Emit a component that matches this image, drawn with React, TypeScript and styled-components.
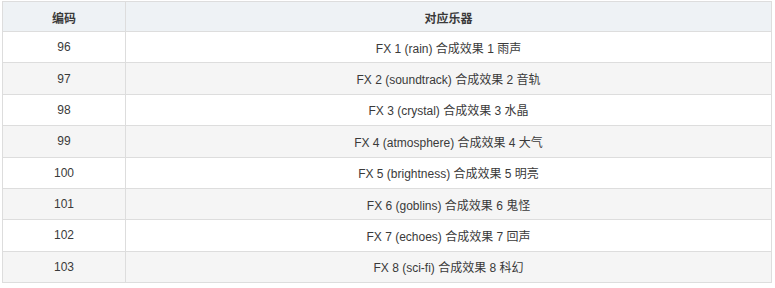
import React from "react";
import styled, { createGlobalStyle } from "styled-components";

const GlobalStyle = createGlobalStyle`
  body {
    margin: 0;
    background: #fff;
    font-family: "Liberation Sans", Arial, "Noto Sans CJK SC", sans-serif;
  }
`;

const Table = styled.table`
  margin: 1px 0 0 2px;
  width: 770px;
  border-collapse: collapse;
  font-size: 12px;
  color: #3a3a3a;
`;

const HeadCell = styled.th<{ $narrow?: boolean }>`
  background: #eef2f5;
  border: 1px solid #ddd;
  height: 30px;
  padding: 1px 8px 0;
  font-weight: bold;
  text-align: center;
  box-sizing: border-box;
  width: ${(p) => (p.$narrow ? "123px" : "auto")};
`;

const Row = styled.tr<{ $striped: boolean }>`
  background: ${(p) => (p.$striped ? "#f5f5f5" : "#fff")};
`;

const Cell = styled.td`
  border: 1px solid #ddd;
  height: 30.375px;
  padding: 0 8px;
  text-align: center;
`;

const instruments: [number, string][] = [
  [96, "FX 1 (rain) 合成效果 1 雨声"],
  [97, "FX 2 (soundtrack) 合成效果 2 音轨"],
  [98, "FX 3 (crystal) 合成效果 3 水晶"],
  [99, "FX 4 (atmosphere) 合成效果 4 大气"],
  [100, "FX 5 (brightness) 合成效果 5 明亮"],
  [101, "FX 6 (goblins) 合成效果 6 鬼怪"],
  [102, "FX 7 (echoes) 合成效果 7 回声"],
  [103, "FX 8 (sci-fi) 合成效果 8 科幻"],
];

const App: React.FC = () => (
  <>
    <GlobalStyle />
    <Table>
      <thead>
        <tr>
          <HeadCell $narrow>编码</HeadCell>
          <HeadCell>对应乐器</HeadCell>
        </tr>
      </thead>
      <tbody>
        {instruments.map(([code, name], i) => (
          <Row key={code} $striped={i % 2 === 1}>
            <Cell>{code}</Cell>
            <Cell>{name}</Cell>
          </Row>
        ))}
      </tbody>
    </Table>
  </>
);

export default App;
